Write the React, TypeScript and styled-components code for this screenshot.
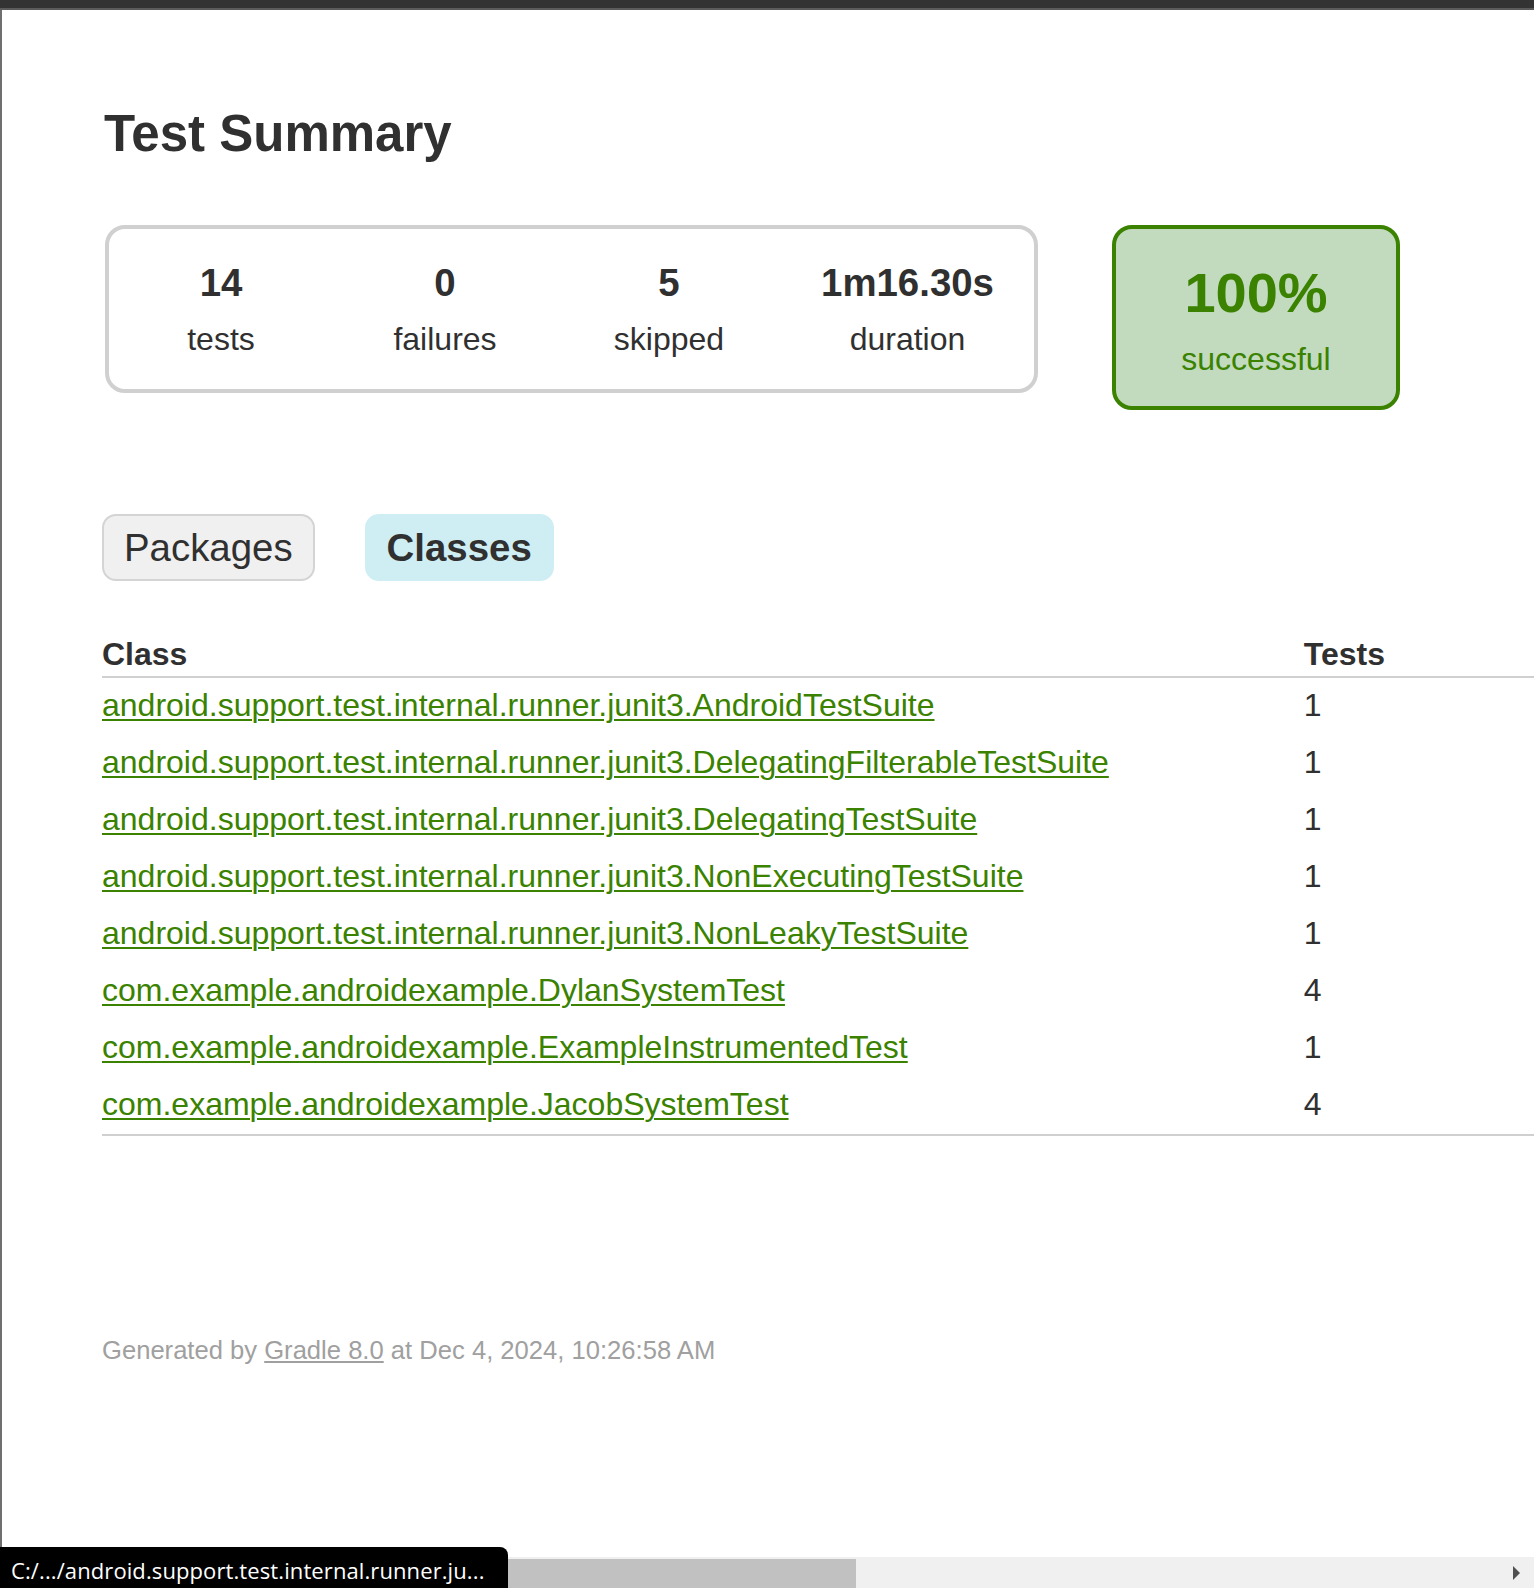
import React from 'react';
import styled, { createGlobalStyle } from 'styled-components';

const GlobalStyle = createGlobalStyle`
  html, body {
    margin: 0;
    padding: 0;
    overflow: hidden;
    background: #ffffff;
  }
  body {
    font-family: "Liberation Sans", Arial, sans-serif;
    color: #303030;
  }
`;

const Window = styled.div`
  position: relative;
  width: 1534px;
  height: 1588px;
  display: flex;
  flex-direction: column;
  overflow: hidden;
  background: #ffffff;
`;

const TopBar = styled.div`
  flex: none;
  height: 8px;
  background: #333333;
  border-bottom: 2px solid #5c5c5c;
`;

const Frame = styled.div`
  flex: 1;
  border-left: 2px solid #6f6f6f;
  overflow: hidden;
`;

const Content = styled.div`
  padding: 95px 0 0 100px;
`;

const Title = styled.h1`
  margin: 0;
  padding-left: 2px;
  font-size: 51px;
  line-height: 58px;
  font-weight: bold;
  color: #303030;
`;

const SummaryRow = styled.div`
  display: flex;
  align-items: flex-start;
  margin: 62px 0 0 3px;
`;

const SummaryGroup = styled.div`
  display: flex;
  padding: 1px 0;
  border: 4px solid #d0d0d0;
  border-radius: 20px;
`;

const InfoBox = styled.div<{ $w: number }>`
  width: ${(p) => p.$w}px;
  padding: 31px 0 30px;
  text-align: center;
`;

const Counter = styled.div`
  font-size: 38.4px;
  line-height: 44px;
  font-weight: bold;
  margin-bottom: 16px;
`;

const Label = styled.div`
  font-size: 32px;
  line-height: 37px;
`;

const SuccessBox = styled.div`
  width: 280px;
  margin-left: 74px;
  padding: 32px 0 28px;
  text-align: center;
  border: 4px solid #3a8200;
  border-radius: 20px;
  background: #c2dbbe;
  color: #3a8200;
`;

const Percent = styled.div`
  font-size: 56px;
  line-height: 64px;
  font-weight: bold;
  margin-bottom: 16px;
`;

const TabList = styled.ul`
  display: flex;
  margin: 104px 0 0;
  padding: 0;
  list-style: none;
  gap: 50px;
`;

const Tab = styled.li<{ $selected?: boolean }>`
  padding: 10px 20px;
  border: 2px solid ${(p) => (p.$selected ? '#ceeef4' : '#d4d4d4')};
  border-radius: 14px;
  background: ${(p) => (p.$selected ? '#ceeef4' : '#f0f0f0')};
  font-size: 38.4px;
  line-height: 43px;
  font-weight: ${(p) => (p.$selected ? 'bold' : 'normal')};
  color: #303030;
`;

const Table = styled.table`
  width: 1432px;
  margin-top: 55px;
  border-collapse: collapse;
  border-bottom: 2px solid #d0d0d0;
  font-size: 32px;
`;

const Th = styled.th`
  text-align: left;
  white-space: nowrap;
  font-weight: bold;
  line-height: 37px;
  padding: 0 0 3px 195px;
  border-bottom: 2px solid #d0d0d0;
  &:first-child {
    width: 1px;
    padding-left: 0;
  }
`;

const Td = styled.td`
  white-space: nowrap;
  line-height: 37px;
  padding: 9px 0 11px 195px;
  &:first-child {
    padding-left: 0;
  }
`;

const ClassLink = styled.a`
  color: #3a8200;
  text-decoration: underline;
  text-decoration-thickness: 2px;
  text-underline-offset: 3px;
`;

const Footer = styled.div`
  margin-top: 199px;
  font-size: 25.6px;
  line-height: 30px;
  color: #a0a0a0;
  white-space: nowrap;
`;

const FooterLink = styled.a`
  color: #a0a0a0;
  text-decoration: underline;
`;

const ScrollTrack = styled.div`
  position: absolute;
  left: 2px;
  right: 0;
  bottom: 0;
  height: 31px;
  background: #f0f0f0;
`;

const ScrollThumb = styled.div`
  position: absolute;
  left: 18px;
  top: 2px;
  width: 836px;
  bottom: 0;
  background: #c1c1c1;
`;

const ScrollArrow = styled.div`
  position: absolute;
  right: 14px;
  top: 9px;
  width: 0;
  height: 0;
  border-top: 7px solid transparent;
  border-bottom: 7px solid transparent;
  border-left: 7px solid #505050;
`;

const StatusTip = styled.div`
  position: absolute;
  left: 0;
  bottom: 0;
  width: 497px;
  height: 36px;
  padding: 5px 0 0 11px;
  background: #000000;
  border-top-right-radius: 8px;
  color: #ffffff;
  font-family: "Open Sans", "Noto Sans", sans-serif;
  font-size: 22px;
  line-height: 36px;
  letter-spacing: 0.1px;
  white-space: nowrap;
  overflow: hidden;
`;

const classes: { name: string; tests: number }[] = [
  { name: 'android.support.test.internal.runner.junit3.AndroidTestSuite', tests: 1 },
  { name: 'android.support.test.internal.runner.junit3.DelegatingFilterableTestSuite', tests: 1 },
  { name: 'android.support.test.internal.runner.junit3.DelegatingTestSuite', tests: 1 },
  { name: 'android.support.test.internal.runner.junit3.NonExecutingTestSuite', tests: 1 },
  { name: 'android.support.test.internal.runner.junit3.NonLeakyTestSuite', tests: 1 },
  { name: 'com.example.androidexample.DylanSystemTest', tests: 4 },
  { name: 'com.example.androidexample.ExampleInstrumentedTest', tests: 1 },
  { name: 'com.example.androidexample.JacobSystemTest', tests: 4 },
];

const summary = [
  { value: '14', label: 'tests', w: 224 },
  { value: '0', label: 'failures', w: 224 },
  { value: '5', label: 'skipped', w: 224 },
  { value: '1m16.30s', label: 'duration', w: 253 },
];

export default function App() {
  return (
    <>
      <GlobalStyle />
      <Window>
        <TopBar />
        <Frame>
          <Content>
            <Title>Test Summary</Title>
            <SummaryRow>
              <SummaryGroup>
                {summary.map((s) => (
                  <InfoBox key={s.label} $w={s.w}>
                    <Counter>{s.value}</Counter>
                    <Label>{s.label}</Label>
                  </InfoBox>
                ))}
              </SummaryGroup>
              <SuccessBox>
                <Percent>100%</Percent>
                <Label>successful</Label>
              </SuccessBox>
            </SummaryRow>
            <TabList>
              <Tab>Packages</Tab>
              <Tab $selected>Classes</Tab>
            </TabList>
            <Table>
              <thead>
                <tr>
                  <Th>Class</Th>
                  <Th>Tests</Th>
                </tr>
              </thead>
              <tbody>
                {classes.map((c) => (
                  <tr key={c.name}>
                    <Td>
                      <ClassLink href="#">{c.name}</ClassLink>
                    </Td>
                    <Td>{c.tests}</Td>
                  </tr>
                ))}
              </tbody>
            </Table>
            <Footer>
              Generated by <FooterLink href="#">Gradle 8.0</FooterLink> at Dec 4, 2024, 10:26:58 AM
            </Footer>
          </Content>
        </Frame>
        <ScrollTrack>
          <ScrollThumb />
          <ScrollArrow />
        </ScrollTrack>
        <StatusTip>C:/.../android.support.test.internal.runner.ju...</StatusTip>
      </Window>
    </>
  );
}
